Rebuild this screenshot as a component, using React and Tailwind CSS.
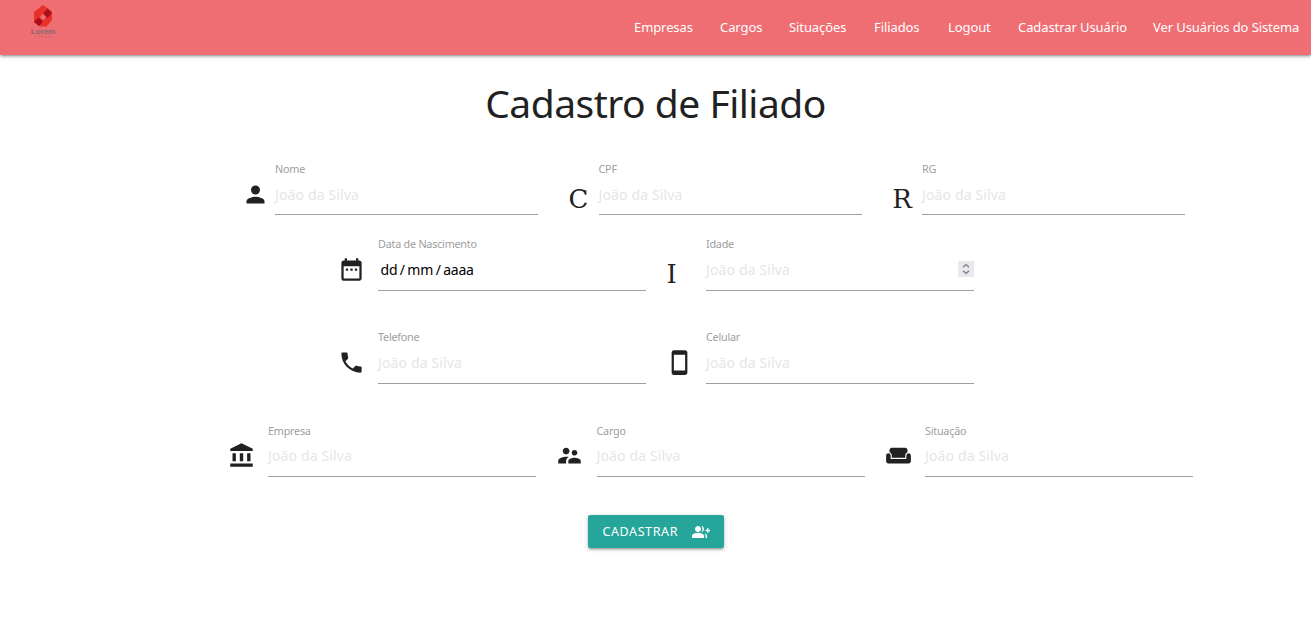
import {
  MdPerson,
  MdDateRange,
  MdPhone,
  MdStayCurrentPortrait,
  MdAccountBalance,
  MdSupervisorAccount,
  MdWeekend,
  MdGroupAdd,
} from "react-icons/md";

const links = [
  { text: "Empresas", width: "w-[59px]" },
  { text: "Cargos", width: "w-[42px]" },
  { text: "Situações", width: "w-[58px]" },
  { text: "Filiados", width: "w-[47px]" },
  { text: "Logout", width: "w-[43px]" },
  { text: "Cadastrar Usuário", width: "w-[108px]" },
  { text: "Ver Usuários do Sistema", width: "w-[147px]" },
];

function Logo() {
  return (
    <div className="ml-[30px] flex w-[26px] flex-col items-center pt-[5px]">
      <svg width="20" height="22" viewBox="0 0 20 22">
        <path fill="#e8312b" fillRule="evenodd" d="M10 0 19 6.500V15L13.500 21.500H7L1 17V7z M10 8.500 7 12 10 15.500 13.500 12z" />
        <path fill="#a90f1e" d="m14.500 3.500 4.500 4.500-4.500 5L10 8.500zM5.500 12.500l4.500 4-4 4.500L1 17z" />
      </svg>
      <span className="font-['Liberation_Sans',sans-serif] text-[8px] leading-[9px] font-bold text-[#85696f]">Lorem</span>
      <span className="pl-[2px] text-[3px] leading-[3px] tracking-[1.6px] text-[#b4646c]">IPSUM</span>
    </div>
  );
}

function Spinner() {
  return (
    <span className="mt-px flex h-4 w-4 items-center justify-center bg-[#e9e9ed]">
      <svg width="8" height="12" viewBox="0 0 8 12" fill="none" stroke="#85858f" strokeWidth="1.500">
        <path d="M1 4.300 4 1.500l3 2.800M1 7.700l3 2.800 3-2.800" />
      </svg>
    </span>
  );
}

function Field({ icon: Icon, letter, label, narrow, date, number, low }) {
  return (
    <div className="flex">
      <div className={narrow ? "w-[34.5px] pt-[20px]" : "w-[41.5px] pt-[20px]"}>
        <div className="h-7 w-7 text-[#212121]">
          {Icon ? (
            <Icon size={27} className="ml-[1px]" />
          ) : (
            <div className={narrow ? "pt-1 pl-px text-center font-['DejaVu_Serif',serif] text-[26px] leading-7" : "pt-1 pl-[2px] font-['DejaVu_Serif',serif] text-[26px] leading-7"}>
              {letter}
            </div>
          )}
        </div>
      </div>
      <div className={narrow ? "w-[263px]" : "w-[268px]"}>
        <div className={low ? "h-4 pt-px text-[10.8px] leading-4 tracking-[-0.23px] text-[#9e9e9e]" : "h-4 text-[10.8px] leading-4 tracking-[-0.23px] text-[#9e9e9e]"}>{label}</div>
        <div className={narrow ? "flex h-[38px] items-start justify-between border-b border-[#9e9e9e] pt-2" : "flex h-[39px] items-start justify-between border-b border-[#9e9e9e] pt-2"}>
          {date ? (
            <span className="flex gap-[2.5px] pl-[2.5px] text-[14px] leading-5 tracking-[-0.2px] text-black">
              <span>dd</span><span>/</span><span>mm</span><span>/</span><span>aaaa</span>
            </span>
          ) : (
            <span className="text-[14px] leading-5 tracking-[0.13px] text-[#e6e6e6]">João da Silva</span>
          )}
          {number && <Spinner />}
        </div>
      </div>
    </div>
  );
}

export default function App() {
  return (
    <div className="h-[623px] overflow-hidden bg-white font-['Noto_Sans',sans-serif] text-[#212121]">
      <nav className="flex h-[55px] items-start justify-between bg-[#ef6e73] pr-[11px] shadow-[0_2px_2px_0_rgba(0,0,0,0.14),0_3px_1px_-2px_rgba(0,0,0,0.12),0_1px_5px_0_rgba(0,0,0,0.2)]">
        <Logo />
        <ul className="flex gap-[27px] text-[13px] leading-[55px] tracking-[-0.09px] text-white">
          {links.map((l) => (
            <li key={l.text} className={`${l.width} whitespace-nowrap`}>{l.text}</li>
          ))}
        </ul>
      </nav>
      <h1 className="mt-[23px] text-center text-[39px] leading-[50px] tracking-[-0.5px]">Cadastro de Filiado</h1>
      <form>
        <div className="mt-[33px] flex gap-[26px] pl-[240.5px]">
          <Field narrow icon={MdPerson} label="Nome" />
          <Field narrow letter="C" label="CPF" />
          <Field narrow letter="R" label="RG" />
        </div>
        <div className="mt-[21px] flex gap-[18.5px] pl-[336.5px]">
          <Field icon={MdDateRange} label="Data de Nascimento" date />
          <Field letter="I" label="Idade" number />
        </div>
        <div className="mt-[38px] flex gap-[18.5px] pl-[336.5px]">
          <Field icon={MdPhone} label="Telefone" />
          <Field icon={MdStayCurrentPortrait} label="Celular" />
        </div>
        <div className="mt-[38px] flex gap-[19px] pl-[226.5px]">
          <Field low icon={MdAccountBalance} label="Empresa" />
          <Field low icon={MdSupervisorAccount} label="Cargo" />
          <Field low icon={MdWeekend} label="Situação" />
        </div>
        <div className="mt-[38px] flex justify-center">
          <button type="button" className="flex h-[33px] w-[136px] items-center justify-between rounded-[2px] bg-[#26a69a] pr-[14px] pl-[15px] text-[12.500px] tracking-[0.6px] text-white shadow-[0_2px_2px_0_rgba(0,0,0,0.14),0_3px_1px_-2px_rgba(0,0,0,0.12),0_1px_5px_0_rgba(0,0,0,0.2)]">
            <span className="pt-px">CADASTRAR</span>
            <MdGroupAdd size={18} />
          </button>
        </div>
      </form>
    </div>
  );
}
